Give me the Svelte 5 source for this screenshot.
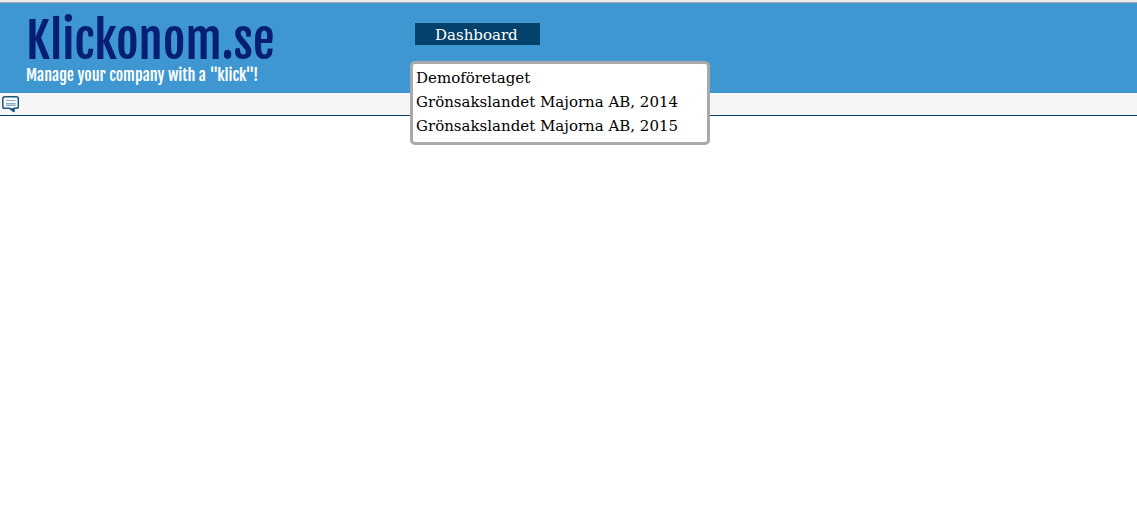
<script>
  const companies = [
    'Demoföretaget',
    'Grönsakslandet Majorna AB, 2014',
    'Grönsakslandet Majorna AB, 2015',
  ];
</script>

<div class="page">
  <div class="strip"></div>
  <header>
    <div class="brand">
      <h1>Klickonom.se</h1>
      <p>Manage your company with a "klick"!</p>
    </div>
    <nav>
      <button type="button" class="tab">Dashboard</button>
      <ul class="menu">
        {#each companies as company}
          <li><a href="#company">{company}</a></li>
        {/each}
      </ul>
    </nav>
  </header>
  <div class="toolbar">
    <button type="button" class="message" aria-label="Messages">
      <svg width="18" height="18" viewBox="0 0 18 18" aria-hidden="true">
        <path d="M2.6 1.8H14.4Q16.3 1.8 16.3 3.7V11.4Q16.3 13.3 14.4 13.3H12V16.6L7.5 13.3H2.6Q.8 13.3 .8 11.4V3.7Q.8 1.8 2.6 1.8Z" fill="#f6fafc" stroke="#1c587f" stroke-width="1.5" stroke-linejoin="round" />
        <path d="M8 13.3H12V16.6Z" fill="#0b4f7b" />
        <path d="M4 8H13.5V11H4Z" fill="#c3d2de" />
        <path d="M4 5.5H13.5M4 8.5H13.5M4 10.5H13.5" stroke="#8cadc5" />
      </svg>
    </button>
  </div>
</div>

<style>
  :global(body) {
    background: #fff;
    font-family: "Roboto Slab", "DejaVu Serif", serif;
    font-size: 15px;
  }
  .page {
    min-height: 100vh;
  }
  .strip {
    height: 2px;
    background: #ececec;
    border-bottom: 1px solid #a9a9a9;
  }
  header {
    display: flex;
    height: 90px;
    background: #3f97d1;
  }
  .brand {
    box-sizing: border-box;
    flex: none;
    width: 415px;
    padding: 14px 0 0 26px;
    font-family: "Fjalla One", "Liberation Sans Narrow", "Liberation Sans", sans-serif;
    white-space: nowrap;
  }
  h1 {
    margin: 0;
    font-size: 49px;
    font-weight: normal;
    line-height: 48px;
    color: #061e73;
  }
  p {
    margin: 0;
    font-size: 16px;
    line-height: 20px;
    color: #fff;
  }
  nav {
    position: relative;
    padding-top: 20px;
  }
  .tab {
    display: block;
    width: 125px;
    height: 22px;
    padding: 2px 0 0 20px;
    border: 0;
    background: #04426b;
    color: #fff;
    font: inherit;
    line-height: 20px;
    text-align: left;
  }
  .menu {
    position: absolute;
    z-index: 1;
    top: 58px;
    left: -5px;
    box-sizing: border-box;
    width: 300px;
    margin: 0;
    padding: 2px 3px 4px;
    border: 3px solid #a9a9a9;
    border-radius: 5px;
    background: #fff;
    list-style: none;
    line-height: 24px;
    white-space: nowrap;
  }
  .menu a {
    display: block;
    color: #000;
    text-decoration: none;
  }
  .toolbar {
    height: 22px;
    background: #f6f6f6;
    border-bottom: 1px solid #04426b;
  }
  .message {
    display: block;
    padding: 2px;
    border: 0;
    background: none;
  }
  svg {
    display: block;
  }
</style>
